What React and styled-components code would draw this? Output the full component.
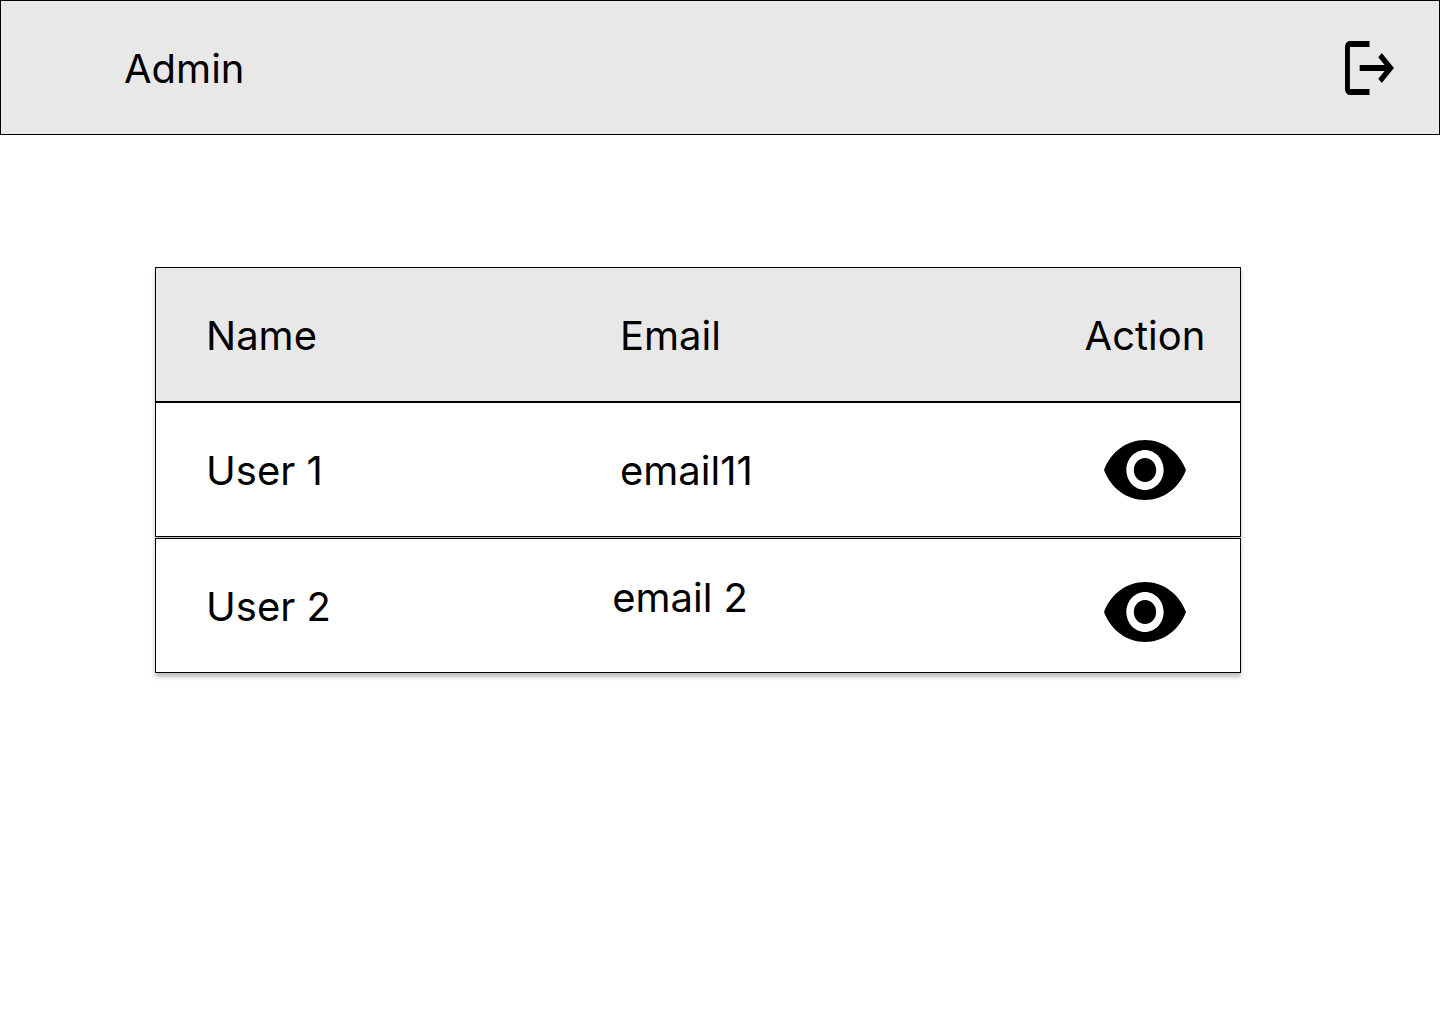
import React from "react";
import styled, { createGlobalStyle } from "styled-components";

const GlobalStyle = createGlobalStyle`
  *, *::before, *::after { box-sizing: border-box; }
  body {
    margin: 0;
    background: #fff;
    color: #000;
    font-family: Inter, "Liberation Sans", sans-serif;
    font-size: 40px;
    line-height: 54px;
  }
`;

const TopBar = styled.header`
  display: flex;
  align-items: center;
  justify-content: space-between;
  min-height: 135px;
  padding: 0 45px 0 123px;
  background: #e8e8e8;
  border: 1px solid #000;
`;

const Title = styled.h1`
  margin: 0;
  padding-top: 2px;
  font-size: 40px;
  font-weight: 400;
`;

const IconButton = styled.button`
  display: block;
  padding: 0;
  border: 0;
  background: none;
  color: inherit;
  cursor: pointer;

  svg {
    display: block;
    fill: currentColor;
  }
`;

const Content = styled.main`
  padding: 132px 199px 132px 155px;
`;

const UserTable = styled.table`
  display: block;
`;

const TableHead = styled.thead`
  display: grid;
`;

const TableBody = styled.tbody`
  display: grid;
  gap: 1px;
`;

const Row = styled.tr`
  display: grid;
  grid-template-columns: 414px 1fr 190px;
  min-height: 135px;
  background: ${(p) => (p.$shaded ? "#e8e8e8" : "#fff")};
  border: 1px solid #000;
  box-shadow: 0 4px 4px rgba(0, 0, 0, 0.25);
`;

const HeadCell = styled.th`
  display: flex;
  align-items: center;
  justify-content: ${(p) => (p.$centered ? "center" : "flex-start")};
  padding: 32px 0 30px ${(p) => (p.$centered ? "0" : "50px")};
  font-weight: 400;
  text-align: left;
`;

const TextCell = styled.td`
  display: flex;
  align-items: ${(p) => p.$align || "center"};
  padding: 32px 0 30px 50px;
`;

const ActionCell = styled.td`
  display: flex;
  align-items: ${(p) => p.$align || "center"};
  justify-content: center;
  padding: 30px 0;
`;

const EmailText = styled.span`
  display: flex;
  justify-content: ${(p) => p.$justify || "flex-start"};
  width: 128px;
  white-space: nowrap;
`;

function LogoutIcon() {
  return (
    <svg width="49" height="54" viewBox="2 3 20 18" preserveAspectRatio="none" aria-hidden="true">
      <path d="M17 7l-1.41 1.41L18.17 11H8v2h10.17l-2.58 2.58L17 17l5-5zM4 5h8V3H4c-1.1 0-2 .9-2 2v14c0 1.1.9 2 2 2h8v-2H4V5z" />
    </svg>
  );
}

function EyeIcon() {
  return (
    <svg width="82" height="60" viewBox="1 4.5 22 15" preserveAspectRatio="none" aria-hidden="true">
      <path d="M12 4.5C7 4.5 2.73 7.61 1 12c1.73 4.39 6 7.5 11 7.5s9.27-3.11 11-7.5c-1.73-4.39-6-7.5-11-7.5zM12 17c-2.76 0-5-2.24-5-5s2.24-5 5-5 5 2.24 5 5-2.24 5-5 5zm0-8c-1.66 0-3 1.34-3 3s1.34 3 3 3 3-1.34 3-3-1.34-3-3-3z" />
    </svg>
  );
}

const users = [
  { name: "User 1", email: "email11" },
  {
    name: "User 2",
    email: "email 2",
    emailAlign: "flex-start",
    emailJustify: "flex-end",
    actionAlign: "flex-end",
  },
];

export default function App() {
  return (
    <>
      <GlobalStyle />
      <TopBar>
        <Title>Admin</Title>
        <IconButton type="button" aria-label="Log out">
          <LogoutIcon />
        </IconButton>
      </TopBar>
      <Content>
        <UserTable>
          <TableHead>
            <Row $shaded>
              <HeadCell scope="col">Name</HeadCell>
              <HeadCell scope="col">Email</HeadCell>
              <HeadCell scope="col" $centered>Action</HeadCell>
            </Row>
          </TableHead>
          <TableBody>
            {users.map((user) => (
              <Row key={user.name}>
                <TextCell>{user.name}</TextCell>
                <TextCell $align={user.emailAlign}>
                  <EmailText $justify={user.emailJustify}>{user.email}</EmailText>
                </TextCell>
                <ActionCell $align={user.actionAlign}>
                  <IconButton type="button" aria-label={`View ${user.name}`}>
                    <EyeIcon />
                  </IconButton>
                </ActionCell>
              </Row>
            ))}
          </TableBody>
        </UserTable>
      </Content>
    </>
  );
}
